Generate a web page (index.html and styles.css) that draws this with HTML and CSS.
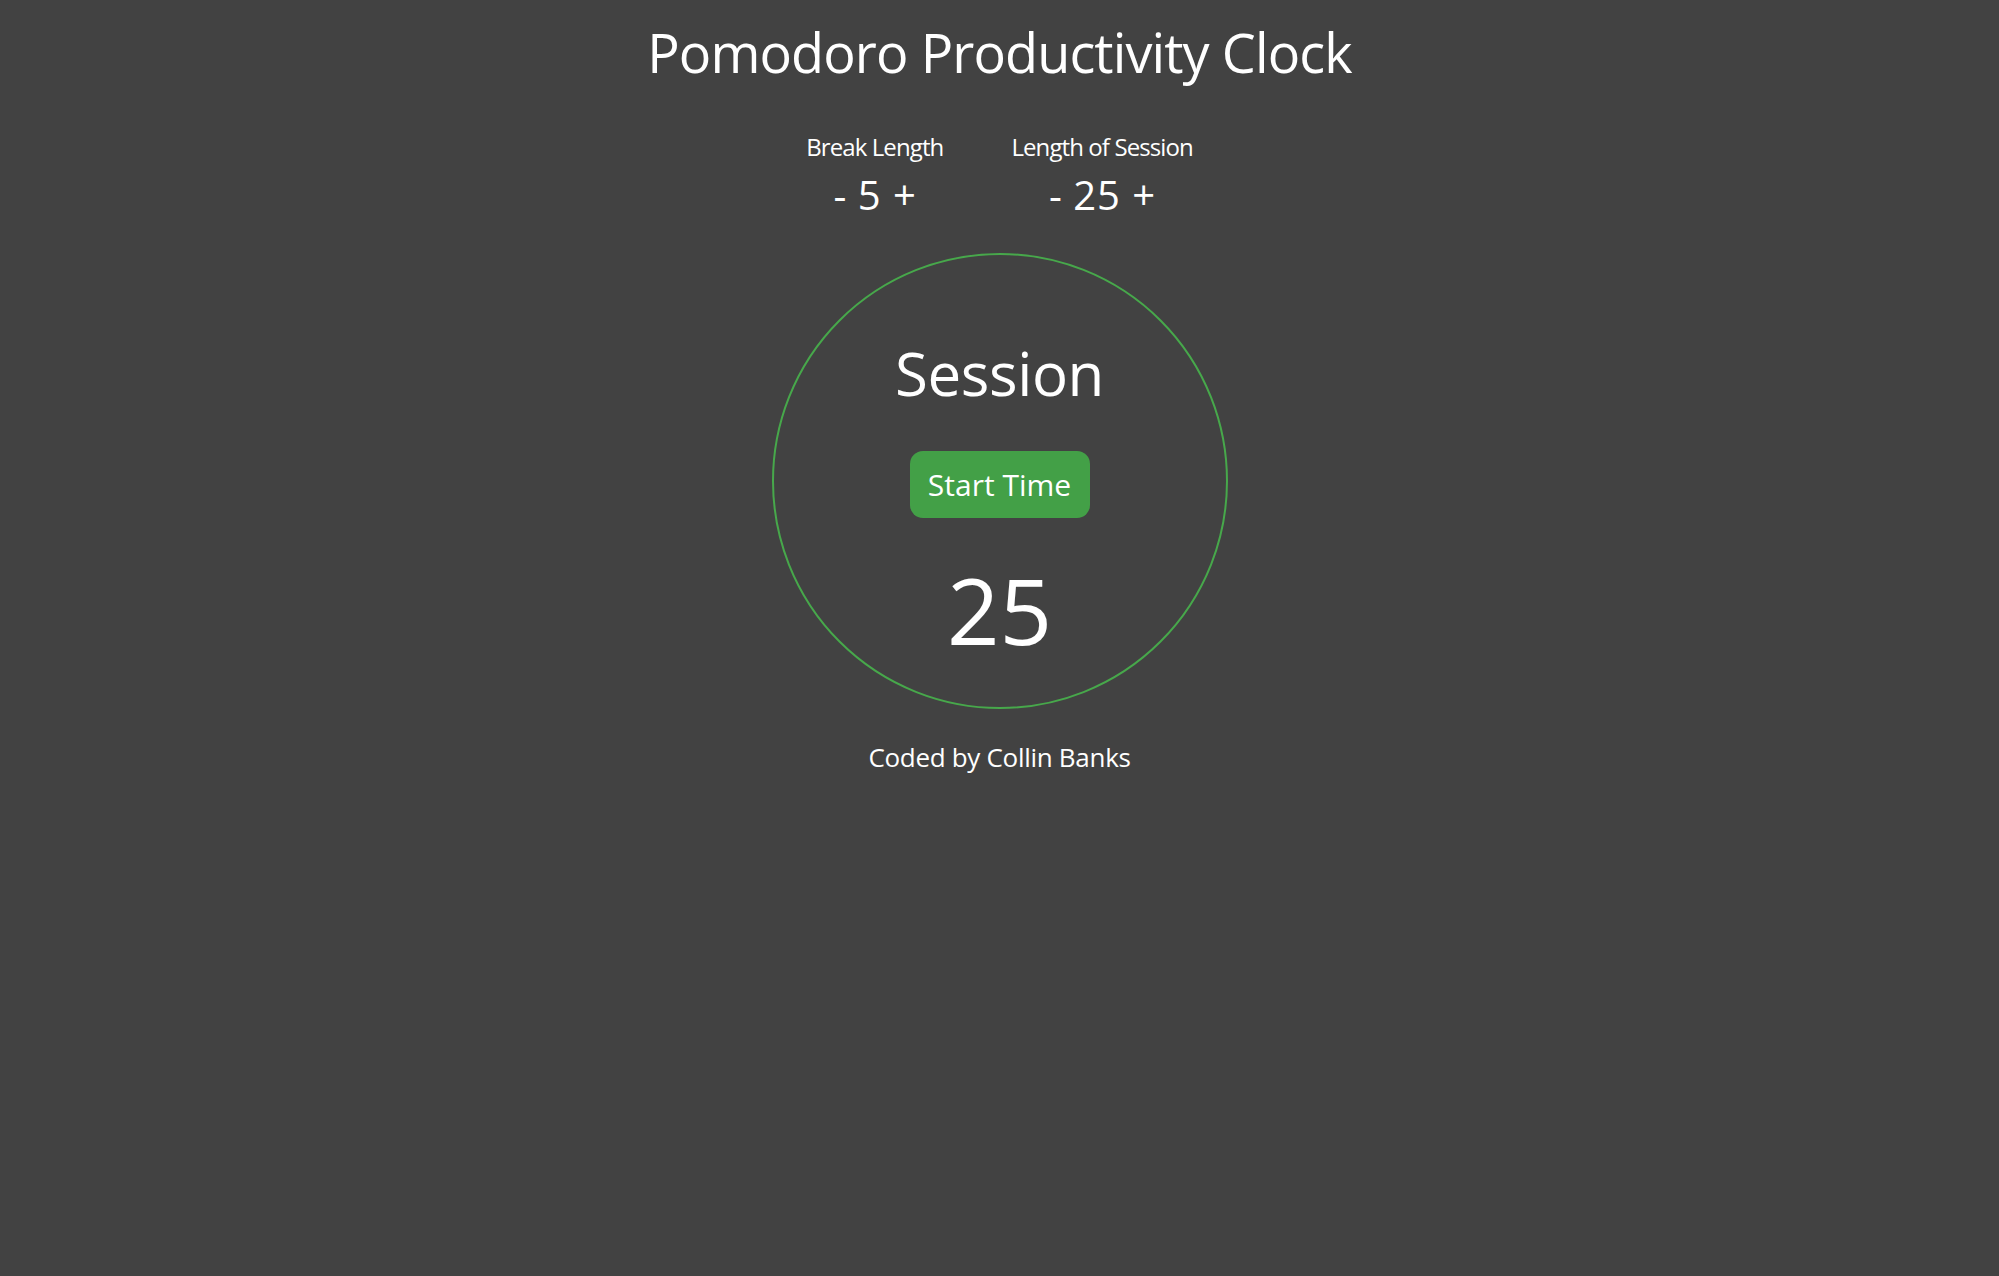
FILE: index.html
```html
<!DOCTYPE html>
<html lang="en">
<head>
<meta charset="utf-8">
<title>Pomodoro Productivity Clock</title>
<link rel="stylesheet" href="styles.css">
</head>
<body>
<main class="app">
  <h1 class="title">Pomodoro Productivity Clock</h1>
  <section class="controls">
    <div class="control">
      <div class="control-label">Break Length</div>
      <div class="control-value"><span class="btn-adj">-</span> <span class="num">5</span> <span class="btn-adj">+</span></div>
    </div>
    <div class="control">
      <div class="control-label">Length of Session</div>
      <div class="control-value"><span class="btn-adj">-</span> <span class="num">25</span> <span class="btn-adj">+</span></div>
    </div>
  </section>
  <section class="clock">
    <div class="clock-mode">Session</div>
    <button class="start-btn" type="button">Start Time</button>
    <div class="clock-time">25</div>
  </section>
  <footer class="credit">Coded by Collin Banks</footer>
</main>
</body>
</html>
```

FILE: styles.css
```css
html, body {
  margin: 0;
  padding: 0;
  background: #424242;
}
body {
  min-height: 1276px;
  color: #ffffff;
  font-family: "Open Sans", "Noto Sans", sans-serif;
}
.app {
  display: flex;
  flex-direction: column;
  align-items: center;
  padding-top: 20px;
}
.title {
  margin: 0;
  font-size: 54px;
  font-weight: 400;
  line-height: 1.2;
  letter-spacing: -0.9px;
}
.controls {
  display: flex;
  justify-content: center;
  gap: 68px;
  margin-top: 48px;
}
.control {
  display: flex;
  flex-direction: column;
  align-items: center;
}
.control-label {
  font-size: 24px;
  line-height: 1.2;
  letter-spacing: -0.9px;
}
.control-value {
  margin-top: 9px;
  font-size: 40px;
  line-height: 1.2;
  word-spacing: 1px;
}
.control-value .num {
  letter-spacing: 1px;
}
.clock {
  margin-top: 34px;
  width: 456px;
  height: 456px;
  box-sizing: border-box;
  border: 2.5px solid #47a84b;
  border-radius: 50%;
  display: flex;
  flex-direction: column;
  align-items: center;
  padding-top: 82px;
}
.clock-mode {
  font-size: 60px;
  line-height: 1.2;
  letter-spacing: -0.4px;
}
.start-btn {
  margin-top: 42px;
  width: 180px;
  height: 67px;
  padding: 16px 0 15px;
  box-sizing: border-box;
  border: none;
  border-radius: 13px;
  background: #43a047;
  color: #ffffff;
  font-family: "Open Sans", "Noto Sans", sans-serif;
  font-size: 30px;
  line-height: 36px;
  cursor: pointer;
}
.clock-time {
  margin-top: 37px;
  font-size: 92px;
  line-height: 1.2;
}
.credit {
  margin-top: 33px;
  font-size: 26px;
  line-height: 1.2;
  letter-spacing: -0.3px;
}
```
